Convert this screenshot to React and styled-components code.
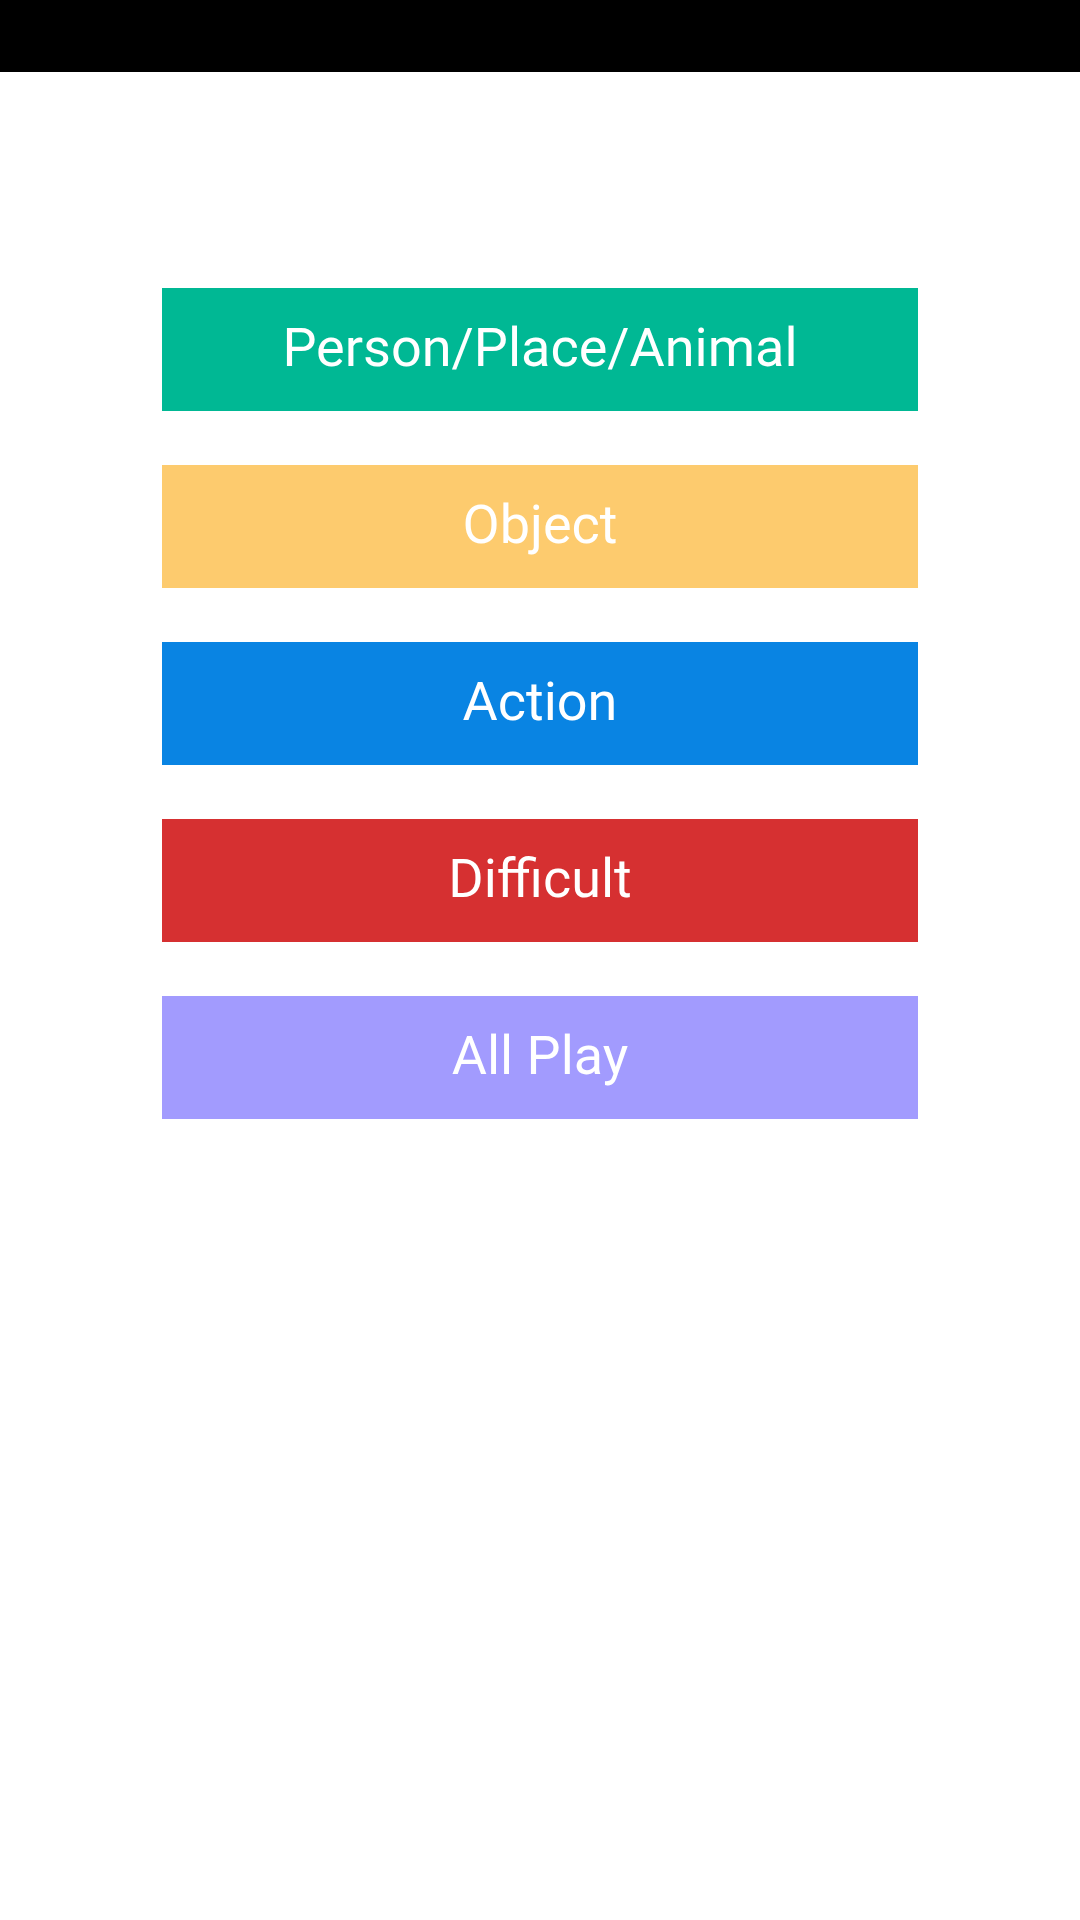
import React from "react";
import styled, { createGlobalStyle } from "styled-components";

const GlobalStyle = createGlobalStyle`
  html, body {
    margin: 0;
    padding: 0;
    background: #ffffff;
    font-family: Roboto, "Noto Sans", sans-serif;
  }
`;

const Screen = styled.div`
  width: 1080px;
  min-height: 1920px;
  background: #ffffff;
  display: flex;
  flex-direction: column;
`;

const StatusBar = styled.div`
  height: 72px;
  background: #000000;
`;

const Menu = styled.div`
  display: flex;
  flex-direction: column;
  align-items: center;
  gap: 54px;
  padding-top: 216px;
`;

const CategoryButton = styled.button`
  width: 756px;
  height: 123px;
  border: none;
  border-radius: 0;
  background: ${(p) => p.color};
  color: #ffffff;
  font-family: Roboto, sans-serif;
  font-size: 54px;
  font-weight: 400;
  display: flex;
  align-items: center;
  justify-content: center;
  padding: 0 0 5px;
  cursor: pointer;
`;

const categories = [
  { label: "Person/Place/Animal", color: "#00b894" },
  { label: "Object", color: "#fdcb6e" },
  { label: "Action", color: "#0984e3" },
  { label: "Difficult", color: "#d63031" },
  { label: "All Play", color: "#a29bfe" },
];

const App = () => {
  return (
    <Screen>
      <GlobalStyle />
      <StatusBar />
      <Menu>
        {categories.map((c) => (
          <CategoryButton key={c.label} color={c.color}>
            {c.label}
          </CategoryButton>
        ))}
      </Menu>
    </Screen>
  );
};

export default App;
